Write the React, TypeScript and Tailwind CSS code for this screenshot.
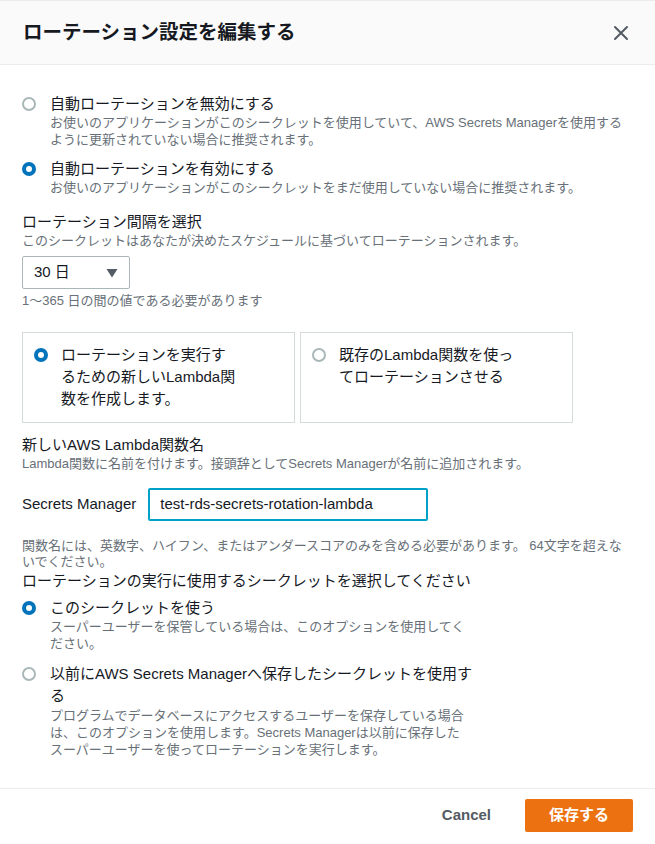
import React from "react";

const font = {
  fontFamily: '"Liberation Sans", "Noto Sans CJK JP", sans-serif',
};

function Radio({ checked }: { checked?: boolean }) {
  if (checked) {
    return (
      <span className="mt-[4px] flex h-[14px] w-[14px] shrink-0 items-center justify-center rounded-full bg-[#0073bb]">
        <span className="h-[6px] w-[6px] rounded-full bg-white" />
      </span>
    );
  }
  return (
    <span className="mt-[4px] h-[14px] w-[14px] shrink-0 rounded-full border-2 border-[#aab7b8] bg-white" />
  );
}

function RadioRow({
  checked,
  label,
  desc,
  labelWidth,
  descWidth,
  tall,
}: {
  checked?: boolean;
  label: string;
  desc: string;
  labelWidth?: string;
  descWidth?: string;
  tall?: boolean;
}) {
  return (
    <div className="flex gap-[14px]">
      <Radio checked={checked} />
      <div>
        <p className={`${labelWidth ?? ""} text-[15px] ${tall ? "leading-[22px]" : "leading-[21px]"} text-[#16191f]`}>
          {label}
        </p>
        <p className={`${descWidth ?? ""} text-[13px] leading-[17px] text-[#687078]`}>{desc}</p>
      </div>
    </div>
  );
}

function Tile({ checked, text }: { checked?: boolean; text: string }) {
  return (
    <div className="flex w-[273px] gap-[13px] border border-[#d5dbdb] pl-[11px] pt-[11px] pb-[12px]">
      <Radio checked={checked} />
      <p className="w-[175px] text-[15px] leading-[22px] text-[#16191f]">{text}</p>
    </div>
  );
}

export default function App() {
  return (
    <div className="min-h-[844px] w-[655px] bg-white [line-break:strict]" style={font}>
      <div className="flex h-[65px] items-center justify-between border-y border-[#eaeded] bg-[#fafafa] px-[23px]">
        <h1 className="text-[19.5px] font-bold text-[#16191f]">ローテーション設定を編集する</h1>
        <svg width="16" height="16" viewBox="0 0 16 16" className="mr-[3px]">
          <path d="M2 2L14 14M14 2L2 14" stroke="#545b64" strokeWidth="2" strokeLinecap="round" />
        </svg>
      </div>

      <div className="px-[22px] pt-[28px] pb-[30px]">
        <RadioRow
          label="自動ローテーションを無効にする"
          desc="お使いのアプリケーションがこのシークレットを使用していて、AWS Secrets Managerを使用するように更新されていない場合に推奨されます。"
        />
        <div className="mt-[10px]">
          <RadioRow
            checked
            label="自動ローテーションを有効にする"
            desc="お使いのアプリケーションがこのシークレットをまだ使用していない場合に推奨されます。"
          />
        </div>

        <div className="mt-[15px]">
          <p className="text-[15px] leading-[21px] text-[#16191f]">ローテーション間隔を選択</p>
          <p className="text-[13px] leading-[17px] text-[#687078]">
            このシークレットはあなたが決めたスケジュールに基づいてローテーションされます。
          </p>
          <div className="mt-[7px] flex h-[33px] w-[108px] items-center justify-between rounded-[2px] border border-[#aab7b8] pl-[11px] pr-[11px]">
            <span className="text-[15px] text-[#16191f]">30 日</span>
            <svg width="12" height="10" viewBox="0 0 12 10">
              <path d="M0.5 1H11.5L6 9.5Z" fill="#545b64" />
            </svg>
          </div>
          <p className="mt-[3px] text-[13px] leading-[17px] text-[#687078]">1〜365 日の間の値である必要があります</p>
        </div>

        <div className="mt-[23px] flex gap-[5px]">
          <Tile checked text="ローテーションを実行するための新しいLambda関数を作成します。" />
          <Tile text="既存のLambda関数を使ってローテーションさせる" />
        </div>

        <div className="mt-[11px]">
          <p className="text-[15px] leading-[21px] text-[#16191f]">新しいAWS Lambda関数名</p>
          <p className="text-[13px] leading-[17px] text-[#687078]">
            Lambda関数に名前を付けます。接頭辞としてSecrets Managerが名前に追加されます。
          </p>
          <div className="mt-[16px] flex items-center gap-[12px]">
            <span className="text-[15px] text-[#16191f]">Secrets Manager</span>
            <div className="flex h-[33px] w-[280px] items-center rounded-[2px] border-2 border-[#00a1c9] pl-[10px]">
              <span className="text-[15px] text-[#16191f]">test-rds-secrets-rotation-lambda</span>
            </div>
          </div>
          <p className="mt-[17px] text-[13px] leading-[16px] text-[#687078]">
            関数名には、英数字、ハイフン、またはアンダースコアのみを含める必要があります。 64文字を超えないでください。
          </p>
        </div>

        <p className="text-[15px] leading-[21px] text-[#16191f]">
          ローテーションの実行に使用するシークレットを選択してください
        </p>
        <div className="mt-[6px]">
          <RadioRow
            checked
            labelWidth="w-[430px]"
            descWidth="w-[422px]"
            label="このシークレットを使う"
            desc="スーパーユーザーを保管している場合は、このオプションを使用してください。"
          />
        </div>
        <div className="mt-[11px]">
          <RadioRow
            tall
            labelWidth="w-[430px]"
            descWidth="w-[422px]"
            label="以前にAWS Secrets Managerへ保存したシークレットを使用する"
            desc="プログラムでデータベースにアクセスするユーザーを保存している場合は、このオプションを使用します。Secrets Managerは以前に保存したスーパーユーザーを使ってローテーションを実行します。"
          />
        </div>
      </div>

      <div className="flex items-center justify-end gap-[34px] border-t border-[#eaeded] px-[22px] pt-[10px] pb-[11px]">
        <span className="text-[15px] font-bold text-[#545b64]">Cancel</span>
        <button className="h-[33px] w-[108px] rounded-[2px] bg-[#ec7211] text-[15px] font-bold text-white">
          保存する
        </button>
      </div>
    </div>
  );
}
